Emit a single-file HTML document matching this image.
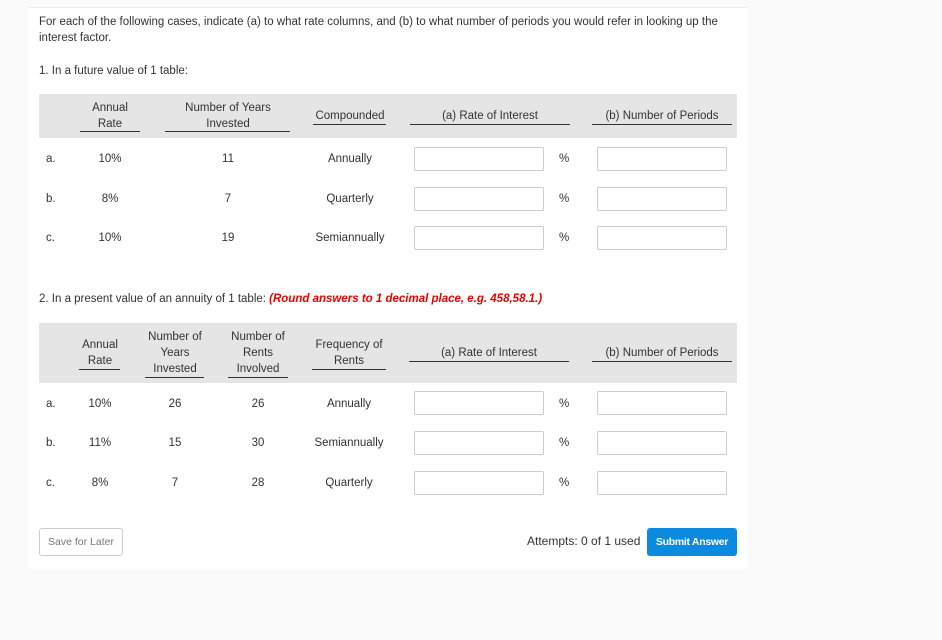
<!DOCTYPE html>
<html><head><style>
body{margin:0;width:942px;height:640px;background:#fafafa;font-family:"Liberation Sans",sans-serif;color:#333;font-size:11.5px;position:relative;overflow:hidden}
.card{position:absolute;left:28px;top:7px;width:720px;height:561px;background:#fff;border-top:1px solid #eee}
.a{position:absolute;white-space:nowrap;line-height:16px}
.c{text-align:center;transform:translateX(-50%)}
.hd{position:absolute;left:39px;width:698px;background:#e5e5e5}
.ul{position:absolute;height:1px;background:#333}
.in{position:absolute;width:128px;height:22px;border:1px solid #ccc;background:#fff;border-radius:2px}
</style></head><body>
<div class="card"></div>
<div class="a" style="left:39px;top:14px">For each of the following cases, indicate (a) to what rate columns, and (b) to what number of periods you would refer in looking up the<br>interest factor.</div>
<div class="a" style="left:39px;top:63px">1. In a future value of 1 table:</div>

<div class="hd" style="top:94px;height:44px"></div>
<div class="a c" style="left:110px;top:100px">Annual<br>Rate</div><div class="ul" style="left:80px;width:60px;top:131px"></div>
<div class="a c" style="left:228px;top:100px">Number of Years<br>Invested</div><div class="ul" style="left:165px;width:125px;top:131px"></div>
<div class="a c" style="left:350px;top:108px">Compounded</div><div class="ul" style="left:313px;width:73px;top:124px"></div>
<div class="a c" style="left:490px;top:108px">(a) Rate of Interest</div><div class="ul" style="left:410px;width:160px;top:124px"></div>
<div class="a c" style="left:662px;top:108px">(b) Number of Periods</div><div class="ul" style="left:592px;width:140px;top:124px"></div>

<div class="a" style="left:46px;top:151px">a.</div><div class="a c" style="left:110px;top:151px">10%</div><div class="a c" style="left:228px;top:151px">11</div><div class="a c" style="left:350px;top:151px">Annually</div>
<div class="in" style="left:414px;top:147px"></div><div class="a" style="left:559px;top:151px">%</div><div class="in" style="left:597px;top:147px"></div>
<div class="a" style="left:46px;top:191px">b.</div><div class="a c" style="left:110px;top:191px">8%</div><div class="a c" style="left:228px;top:191px">7</div><div class="a c" style="left:350px;top:191px">Quarterly</div>
<div class="in" style="left:414px;top:187px"></div><div class="a" style="left:559px;top:191px">%</div><div class="in" style="left:597px;top:187px"></div>
<div class="a" style="left:46px;top:230px">c.</div><div class="a c" style="left:110px;top:230px">10%</div><div class="a c" style="left:228px;top:230px">19</div><div class="a c" style="left:350px;top:230px">Semiannually</div>
<div class="in" style="left:414px;top:226px"></div><div class="a" style="left:559px;top:230px">%</div><div class="in" style="left:597px;top:226px"></div>

<div class="a" style="left:39px;top:291px">2. In a present value of an annuity of 1 table: <b style="color:#e00;font-style:italic">(Round answers to 1 decimal place, e.g. 458,58.1.)</b></div>

<div class="hd" style="top:323px;height:60px"></div>
<div class="a c" style="left:100px;top:337px">Annual<br>Rate</div><div class="ul" style="left:79px;width:41px;top:369px"></div>
<div class="a c" style="left:175px;top:329px">Number of<br>Years<br>Invested</div><div class="ul" style="left:145px;width:59px;top:377px"></div>
<div class="a c" style="left:258px;top:329px">Number of<br>Rents<br>Involved</div><div class="ul" style="left:228px;width:60px;top:377px"></div>
<div class="a c" style="left:349px;top:337px">Frequency of<br>Rents</div><div class="ul" style="left:312px;width:74px;top:369px"></div>
<div class="a c" style="left:489px;top:345px">(a) Rate of Interest</div><div class="ul" style="left:409px;width:160px;top:361px"></div>
<div class="a c" style="left:662px;top:345px">(b) Number of Periods</div><div class="ul" style="left:592px;width:140px;top:361px"></div>

<div class="a" style="left:46px;top:396px">a.</div><div class="a c" style="left:100px;top:396px">10%</div><div class="a c" style="left:175px;top:396px">26</div><div class="a c" style="left:258px;top:396px">26</div><div class="a c" style="left:349px;top:396px">Annually</div>
<div class="in" style="left:414px;top:391px"></div><div class="a" style="left:559px;top:396px">%</div><div class="in" style="left:597px;top:391px"></div>
<div class="a" style="left:46px;top:435px">b.</div><div class="a c" style="left:100px;top:435px">11%</div><div class="a c" style="left:175px;top:435px">15</div><div class="a c" style="left:258px;top:435px">30</div><div class="a c" style="left:349px;top:435px">Semiannually</div>
<div class="in" style="left:414px;top:431px"></div><div class="a" style="left:559px;top:435px">%</div><div class="in" style="left:597px;top:431px"></div>
<div class="a" style="left:46px;top:475px">c.</div><div class="a c" style="left:100px;top:475px">8%</div><div class="a c" style="left:175px;top:475px">7</div><div class="a c" style="left:258px;top:475px">28</div><div class="a c" style="left:349px;top:475px">Quarterly</div>
<div class="in" style="left:414px;top:471px"></div><div class="a" style="left:559px;top:475px">%</div><div class="in" style="left:597px;top:471px"></div>

<div class="a" style="left:39px;top:528px;width:82px;height:26px;border:1px solid #ccc;border-radius:3px;color:#777;font-size:10.5px;line-height:26px;text-align:center">Save for Later</div>
<div class="a" style="left:527px;top:533px;font-size:12px">Attempts: 0 of 1 used</div>
<div class="a" style="left:647px;top:528px;width:90px;height:28px;background:#0b8ae0;border-radius:3px;color:#fff;font-weight:bold;font-size:10.5px;line-height:28px;text-align:center;letter-spacing:-0.3px">Submit Answer</div>
</body></html>
